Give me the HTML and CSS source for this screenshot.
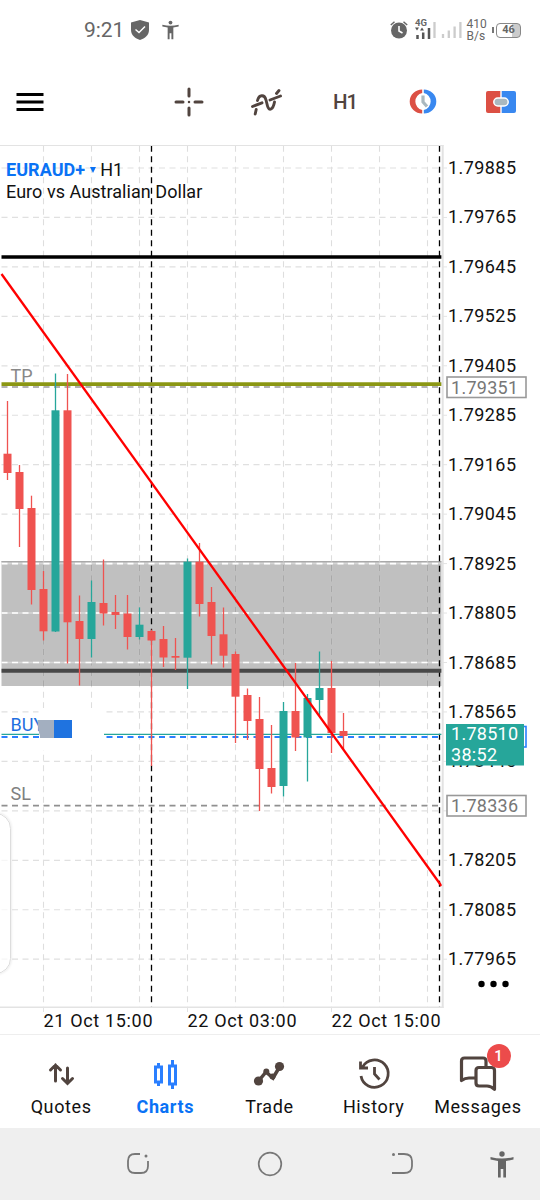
FILE: index.html
```html
<!DOCTYPE html>
<html lang="en">
<head>
  <meta charset="UTF-8" />
  <title>EURAUD+ H1</title>
  <meta name="viewport" content="width=device-width, initial-scale=1" />
  <link rel="stylesheet" href="styles.css">
</head>
<body>

  <header class="status-bar">
    <div class="status-left">
      <span class="clock">9:21</span>
      <svg width="18" height="20" viewBox="0 0 18 20"><path d="M9 0L18 2.500V10C18 15 14 18.500 9 20C4 18.500 0 15 0 10V2.500Z" fill="#666"/><path d="M4.500 9.500L8 12.500L14 6.500" fill="none" stroke="#fff" stroke-width="1.500"/></svg>
      <svg class="person" width="17" height="20" viewBox="0 0 24 27"><circle cx="12" cy="3" r="2.700" fill="#666"/><path d="M0.500 6Q12 9 23.500 6V8.600L16 10V26.500H13.300V18H10.700V26.500H8V10L0.500 8.600Z" fill="#666"/></svg>
    </div>
    <div class="status-right">
      <svg class="alarm" width="18" height="18" viewBox="0 0 18 18"><circle cx="9" cy="9.500" r="8" fill="#666"/><path d="M9 5V10L12.500 12" fill="none" stroke="#fff" stroke-width="1.600"/><path d="M0.800 4L4.500 0.800M17.200 4L13.500 0.800" stroke="#666" stroke-width="1.500"/></svg>
      <div class="mobile">
        <span>4G</span>
        <svg width="18" height="12" viewBox="0 0 18 12"><path d="M0 0.500H4L2 3.500ZM5 3.500H9L7 0.500Z" fill="#555"/><path d="M2.500 12V8M8.200 12V5.500M14 12V1" stroke="#555" stroke-width="2.500"/></svg>
      </div>
      <svg class="signal" width="29" height="16" viewBox="0 0 29 16"><path d="M1.500 16V0M10 16V12M15.800 16V8.500M21.600 16V4.500M27.400 16V0" stroke="#ccc" stroke-width="2.300"/></svg>
      <div class="speed">410<br>B/s</div>
      <div class="battery"><span>46</span></div>
    </div>
  </header>

  <nav class="toolbar">
    <svg class="menu" width="28" height="20" viewBox="0 0 28 20"><path d="M0.500 2.500H27.500M0.500 10H27.500M0.500 17.500H27.500" stroke="#000" stroke-width="3"/></svg>
    <svg width="30" height="30" viewBox="0 0 30 30"><path d="M15 2V9M15 21V28M2 15H9M21 15H28" stroke="#51443f" stroke-width="3" stroke-linecap="round"/><rect x="13.900" y="13.900" width="2.200" height="2.200" fill="#51443f"/></svg>
    <svg width="34" height="28" viewBox="0 0 34 28"><path d="M3.500 18.500L13 14.800M6.200 26L7.200 21.500M8.500 12.500C10 6.500 15.500 6 17 12L18.500 18C20 23.500 24 22 25.500 14M21 12L31.500 8M27.500 5.500L30 2.500" fill="none" stroke="#51443f" stroke-width="2.900" stroke-linecap="round"/></svg>
    <span class="period">H1</span>
    <svg width="30" height="25" viewBox="0 0 30 25"><path d="M14.200 0.500A12.500 12 0 0 0 14.200 24.500V21A8.700 8.700 0 0 1 14.200 4Z" fill="#dc5044"/><path d="M15.800 0.500A12.500 12 0 0 1 15.800 24.500V21A8.700 8.700 0 0 0 15.800 4Z" fill="#3988f0"/><path d="M15 6.500V13L19 17.500" fill="none" stroke="#aab8bf" stroke-width="3.200"/></svg>
    <svg width="30" height="22" viewBox="0 0 30 22"><path d="M2 0H14.300V22H2Q0 22 0 20V2Q0 0 2 0Z" fill="#dc5044"/><path d="M15.700 0H28Q30 0 30 2V20Q30 22 28 22H15.700Z" fill="#3988f0"/><rect x="7.800" y="7" width="14.400" height="8" rx="4" fill="#aab8bf" stroke="#fff" stroke-width="1.500"/></svg>
  </nav>

  <main class="chart">
    <svg id="plot" width="540" height="889" viewBox="0 145 540 889"></svg>
    <div class="symbol">
      <div><b>EURAUD+</b><i></i>H1</div>
      <div>Euro vs Australian Dollar</div>
    </div>
    <div class="edge-panel"></div>
  </main>

  <nav class="tabs">
    <a class="tab">
      <svg width="44" height="36" viewBox="0 0 44 36"><path d="M16.500 26V10M11.500 15L16.500 10L21.500 15M28.500 13V28M23.500 23.500L28.500 28.500L33.500 23.500" fill="none" stroke="#51443f" stroke-width="3" stroke-linecap="round"/></svg>
      <span>Quotes</span>
    </a>
    <a class="tab active">
      <svg width="44" height="36" viewBox="0 0 44 36"><path d="M15.500 8V12M15.500 27V31M29.500 5V11M29.500 29V34" stroke="#2a7fff" stroke-width="3"/><path d="M12.500 12H18.500V27H12.500ZM26.500 11H32.500V29H26.500Z" fill="#fff" stroke="#2a7fff" stroke-width="3"/></svg>
      <span>Charts</span>
    </a>
    <a class="tab">
      <svg width="44" height="36" viewBox="0 0 44 36"><path d="M11.500 26L19 17L26 23L32.500 12" fill="none" stroke="#51443f" stroke-width="3.500"/><circle cx="11.500" cy="26" r="4.600" fill="#51443f"/><circle cx="19.300" cy="16.500" r="3" fill="#51443f"/><circle cx="25.500" cy="21.500" r="3" fill="#51443f"/><circle cx="32.500" cy="11.500" r="4.600" fill="#51443f"/></svg>
      <span>Trade</span>
    </a>
    <a class="tab">
      <svg width="44" height="36" viewBox="0 0 44 36"><path d="M10.500 12A13.700 13.700 0 1 1 9 21M8.500 6.500V13H16" fill="none" stroke="#51443f" stroke-width="2.800"/><path d="M22.500 12V19L27.500 24.500" fill="none" stroke="#51443f" stroke-width="2.800"/></svg>
      <span>History</span>
    </a>
    <a class="tab">
      <svg width="44" height="36" viewBox="0 0 44 36"><path d="M19 23H13Q9 23 5.500 25.500V6Q5.500 3 8.500 3H27Q30 3 30 6V11" fill="none" stroke="#51443f" stroke-width="3.200" stroke-linejoin="round"/><path d="M23 12.500H35.500Q38.500 12.500 38.500 15.500V34.300Q35 31 31 31H23Q20 31 20 28V15.500Q20 12.500 23 12.500Z" fill="#fff" stroke="#51443f" stroke-width="3.200" stroke-linejoin="round"/></svg>
      <span>Messages</span>
      <em class="badge">1</em>
    </a>
  </nav>

  <footer class="nav-bar">
    <svg width="24" height="24" viewBox="0 0 24 24"><path d="M14 2H9Q2 2 2 9V14Q2 21 9 21H15Q22 21 22 14V9" fill="none" stroke="#777" stroke-width="1.800"/><circle cx="20" cy="4" r="1.500" fill="#777"/></svg>
    <svg width="26" height="26" viewBox="0 0 26 26"><circle cx="13" cy="13" r="11.300" fill="none" stroke="#777" stroke-width="1.700"/></svg>
    <svg width="24" height="24" viewBox="0 0 24 24"><path d="M8 2H14Q22 2 22 9V14Q22 21 14 21H2" fill="none" stroke="#777" stroke-width="1.800"/><circle cx="3.500" cy="2.500" r="1.500" fill="#777"/></svg>
    <svg width="24" height="27" viewBox="0 0 24 27"><circle cx="12" cy="3" r="2.700" fill="#666"/><path d="M0.500 6Q12 9 23.500 6V8.600L16 10V26.500H13.300V18H10.700V26.500H8V10L0.500 8.600Z" fill="#666"/></svg>
  </footer>

  <script src="chart.js"></script>
</body>
</html>
```
FILE: styles.css
```css
:root {
  --color-blue: #0a72f5;
  --color-brown: #51443f;
  --color-gray: #666;
}

* {
  box-sizing: border-box;
}

body {
  margin: 0;
  width: 540px;
  height: 1200px;
  background: #fff;
  color: #111;
  font-family: Roboto, sans-serif;
  display: flex;
  flex-direction: column;
  overflow: hidden;
}

svg {
  display: block;
  flex: none;
}

.status-bar {
  height: 60px;
  padding: 0 19px 0 84px;
  display: flex;
  justify-content: space-between;
  align-items: center;
  color: var(--color-gray);
}

.status-left,
.status-right {
  display: flex;
  align-items: center;
}

.clock {
  width: 47px;
  font-size: 21px;
  letter-spacing: -0.1px;
}

.person {
  margin-left: 13px;
}

.mobile {
  width: 18px;
  height: 20px;
  margin: 0 0 3px 7px;
}

.mobile span {
  display: block;
  height: 8px;
  font-size: 9.5px;
  font-weight: 700;
  line-height: 7px;
}

.speed {
  width: 24px;
  margin-left: 4.5px;
  font-size: 12px;
  line-height: 12px;
}

.battery {
  position: relative;
  width: 25px;
  height: 15px;
  margin-left: 5.5px;
  border: 1.5px solid #888;
  border-radius: 4px;
  background: linear-gradient(90deg, #fff 65%, #ccc 65%);
  font-size: 11px;
  font-weight: 700;
  line-height: 12px;
  text-align: center;
}

.battery::before {
  content: "";
  position: absolute;
  left: -5px;
  top: 3px;
  width: 2px;
  height: 6px;
  background: #777;
}

.toolbar {
  height: 85px;
  padding: 0 24px 2px 16px;
  display: flex;
  align-items: center;
}

.toolbar .menu {
  margin-right: 130px;
}

.toolbar svg:nth-child(3) {
  margin-left: 45px;
}

.period {
  width: 22px;
  margin: 0 53px 0 50px;
  color: var(--color-brown);
  font-size: 20.5px;
  font-weight: 500;
  letter-spacing: -1px;
}

.toolbar svg:last-child {
  margin-left: auto;
}

.chart {
  position: relative;
  height: 889px;
}

.chart text {
  font-family: Roboto, sans-serif;
  font-size: 18px;
}

.symbol {
  position: absolute;
  left: 6px;
  top: 13.5px;
  font-size: 18px;
  letter-spacing: 0.05px;
  line-height: 22px;
  white-space: nowrap;
}

.symbol b {
  color: var(--color-blue);
}

.symbol i {
  display: inline-block;
  margin: 0 4px 3px 5px;
  border: 3.5px solid transparent;
  border-top: 6px solid var(--color-blue);
  border-bottom: 0;
}

.edge-panel {
  position: absolute;
  left: -20px;
  top: 668px;
  width: 31px;
  height: 161px;
  border: 1px solid #ddd;
  border-radius: 20px;
  background: rgba(255, 255, 255, 0.7);
  box-shadow: 0 0 3px #ddd;
}

.tabs {
  height: 94px;
  border-top: 1px solid #eee;
  padding: 0 9px;
  display: grid;
  grid-template-columns: repeat(5, 104.2px);
}

.tab {
  position: relative;
  display: flex;
  flex-direction: column;
  align-items: center;
  padding-top: 20px;
  font-size: 18px;
  letter-spacing: 0.6px;
}

.tab span {
  margin-top: 4px;
  line-height: 24px;
}

.tab.active {
  color: var(--color-blue);
  font-weight: 700;
}

.badge {
  position: absolute;
  left: 61px;
  top: 9px;
  width: 24px;
  height: 24px;
  border-radius: 50%;
  background: #ec4b4b;
  color: #fff;
  font-size: 15px;
  font-style: normal;
  font-weight: 500;
  line-height: 24px;
  text-align: center;
}

.nav-bar {
  height: 72px;
  padding-left: 126px;
  background: #efefef;
  display: flex;
  align-items: center;
  gap: 107px;
}

.nav-bar svg:last-child {
  margin-left: -31px;
}
```
FILE: chart.js
```js
const plot = document.getElementById('plot');
const GREEN = '#26a69a';
const RED = '#ef5350';

// high, body top, body bottom, low, rising
const candles = [
  [401, 453.7, 473, 480, 0],
  [465, 472, 509, 547, 0],
  [495.7, 508, 590, 604.5, 0],
  [571, 589, 631.3, 640.5, 0],
  [373.5, 410.3, 631.5, 632, 1],
  [374, 410.3, 622.3, 663.5, 0],
  [595.5, 621, 639, 685.5, 0],
  [580.5, 602, 639, 657.5, 1],
  [559.5, 603, 613.5, 625.5, 0],
  [595, 612, 615, 629, 0],
  [595, 613.5, 637, 649.5, 0],
  [607.5, 624.7, 637, 639.5, 1],
  [629.7, 631, 640.5, 766, 0],
  [626, 639, 657.5, 667, 0],
  [638, 656, 657.7, 670, 0],
  [558.5, 561.7, 657.7, 689, 1],
  [543, 561.7, 604, 616.5, 0],
  [587, 602, 636, 664.5, 0],
  [607.5, 634.3, 655.7, 667.5, 0],
  [651.5, 654, 696.7, 743, 0],
  [688.5, 695, 721, 740, 0],
  [697, 719, 769, 811, 0],
  [725, 768, 787, 793.5, 0],
  [702, 711, 786, 796.5, 1],
  [663, 711, 737.5, 751, 0],
  [694, 698, 737.5, 781.5, 1],
  [651.5, 688, 700, 716, 1],
  [661, 688, 733, 753, 0],
  [713, 731, 736, 749, 0]
];

let out = '';

function line(x1, y1, x2, y2, color, width, dash) {
  out += `<line x1="${x1}" y1="${y1}" x2="${x2}" y2="${y2}" stroke="${color}" stroke-width="${width}"${dash ? ` stroke-dasharray="${dash}"` : ''}/>`;
}

function rect(x, y, w, h, fill, extra = '') {
  out += `<rect x="${x}" y="${y}" width="${w}" height="${h}" fill="${fill}" ${extra}/>`;
}

function text(x, y, str, fill = '#111', extra = '') {
  out += `<text x="${x}" y="${y}" fill="${fill}" ${extra}>${str}</text>`;
}

// supply zone
rect(1.5, 561, 440, 125, '#c0c0c0');
line(1.5, 561.7, 441.5, 561.7, '#a9a9a9', 1.2);

// grid
for (let x = 43.5; x < 440; x += 48) {
  line(x, 145.7, x, 1007, '#dedede', 1.1, '6 4.5');
  line(x, 561, x, 686, '#c0c0c0', 1.4);
  line(x, 565, x, 686, '#a9a9a9', 1, '6 4.5');
}
for (let i = 0; i < 17; i++) {
  const y = 168 + i * 49.45;
  const inZone = y > 561 && y < 686;
  if (inZone) line(1.5, y, 441.5, y, '#d6d6d6', 1.5);
  line(1.5, y, 441.5, y, inZone ? '#fff' : '#e0e0e0', inZone ? 1.6 : 1.2, '6 4.5');
  line(443, y, 447, y, '#e3e3e3', 1);
  // the stop loss tag takes the place of this label
  if (i !== 13) text(448, y + 6, (1.79885 - i * 0.0012).toFixed(5), '#111', 'textLength="68"');
}

// day separators
line(151.5, 145.7, 151.5, 1007, '#000', 1.3, '6 4.5');
line(151.5, 641, 151.5, 766, '#fff', 1.5);
line(151.5, 641, 151.5, 686, '#c0c0c0', 1.5);
line(439.5, 145.7, 439.5, 1007, '#000', 1.3, '6 4.5');

// levels
line(1.5, 257, 441.5, 257, '#000', 3.7);
line(1.5, 670.8, 441.5, 670.8, '#484848', 4);
line(1.5, 387, 441.5, 387, '#999', 1.7, '6 4.5');
line(1.5, 384.2, 441.5, 384.2, '#8b9713', 3.8);
line(1.5, 805.7, 441.5, 805.7, '#909090', 1.7, '6 4.5');

// open position
line(1.5, 737, 441.5, 737, '#2a7fff', 1.8, '6 4.5');
line(1.5, 734.3, 441.5, 734.3, GREEN, 1.2);

candles.forEach(([high, top, bottom, low, up], i) => {
  const x = 7.5 + i * 12;
  const color = up ? GREEN : RED;
  line(x, high, x, low, color, 1.3);
  rect(x - 4, top, 8, bottom - top, color);
});

rect(39, 708, 65, 42, '#fff');
text(10.5, 731, 'BUY', '#1f6fe0');
out += '<path d="M37.5 720H54V738H41Q38 733 37.5 720Z" fill="#a3afc0"/>';
rect(40, 720, 14, 18, '#a3afc0');
rect(54, 720, 18, 18, '#1f73e0');
rect(38.5, 710, 8, 10, '#fff');
text(10.5, 381.5, 'TP', '#888');
text(10.5, 800, 'SL', '#808080');

line(1.5, 274, 441.5, 886, '#f00', 2.3);

// frame
line(0, 145, 443.5, 145, '#e3e3e3', 2);
line(442.7, 144, 442.7, 1008, '#e3e3e3', 2);
line(0, 1007.3, 443.5, 1007.3, '#e3e3e3', 1.5);

// price tags
rect(447, 377, 79, 20.5, '#fff', 'stroke="#999" stroke-width="1.6"');
text(451, 393.5, '1.79351', '#777', 'textLength="67"');
rect(447, 795.5, 79, 20.5, '#fff', 'stroke="#999" stroke-width="1.6"');
text(451, 812, '1.78336', '#777', 'textLength="67"');
rect(447, 726.5, 79, 20.5, '#fff', 'stroke="#2a7fff" stroke-width="1.6"');
rect(446, 724, 78, 41.5, GREEN);
text(451, 740.3, '1.78510', '#fff', 'textLength="67"');
text(451, 761, '38:52', '#fff', 'textLength="46"');

[481.5, 493.5, 505.5].forEach(x => {
  out += `<circle cx="${x}" cy="984" r="3.2" fill="#000"/>`;
});

// time scale
['21 Oct 15:00', '22 Oct 03:00', '22 Oct 15:00'].forEach((label, i) => {
  line(43.5 + i * 144, 1007, 43.5 + i * 144, 1012, '#e3e3e3', 1);
  text(43.5 + i * 144, 1027.3, label, '#111', 'textLength="109"');
});

plot.innerHTML = out;
```
